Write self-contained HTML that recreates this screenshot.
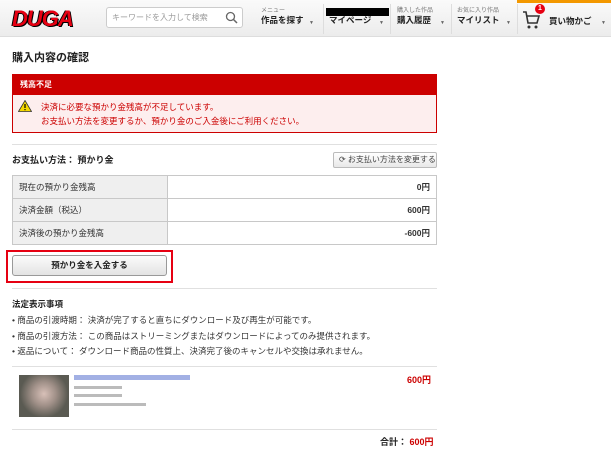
<!DOCTYPE html>
<html><head><meta charset="utf-8"><style>
*{margin:0;padding:0;box-sizing:border-box}
body{width:611px;height:455px;overflow:hidden;background:#fff;font-family:"Liberation Sans","Noto Sans CJK JP",sans-serif;font-size:9px;color:#333;position:relative}
.a{position:absolute}
.hdr{left:0;top:0;width:611px;height:37px;background:linear-gradient(#fafafa,#ececec);border-bottom:1px solid #ddd}
.b{font-weight:bold}
.sep{position:absolute;left:12px;width:425px;height:1px;background:#e0e0e0}
.nav small{display:block;font-size:6px;font-weight:normal;color:#777;line-height:8px}
.nav{position:absolute;top:7px;font-size:8.5px;font-weight:bold;color:#222;line-height:11px;white-space:nowrap}
.vl{position:absolute;top:4px;width:1px;height:30px;background:#ddd}
.ar{position:absolute;top:20px;font-size:5px;color:#666}
td{border:1px solid #c8c8c8;height:23px;padding:0 6px;font-size:8.5px}
table{border-collapse:collapse;position:absolute;left:12px;top:175px;width:425px}
td.l{background:#efefef;width:155px}
td.r{text-align:right;font-weight:bold}
</style></head><body>
<div class="a hdr"></div>
<div class="a" style="left:517px;top:0;width:94px;height:3px;background:#f39800"></div>
<div class="a" style="left:12px;top:6px;font:italic 900 22px 'Liberation Sans',sans-serif;color:#e60012;letter-spacing:-1px;text-shadow:1px 1px 0 #000,-1px 0 0 #000">DUGA</div>
<div class="a" style="left:106px;top:7px;width:137px;height:21px;background:#fff;border:1px solid #ccc;border-radius:3px;font-size:8px;color:#999;padding:4px 5px">キーワードを入力して検索</div>
<svg class="a" style="left:225px;top:11px" width="13" height="13"><circle cx="5.5" cy="5.5" r="4" fill="none" stroke="#666" stroke-width="1.3"/><line x1="8.5" y1="8.5" x2="12" y2="12" stroke="#666" stroke-width="1.5"/></svg>
<div class="nav" style="left:261px"><small>メニュー</small>作品を探す</div><div class="ar" style="left:309px">▼</div>
<div class="vl" style="left:323px"></div>
<div class="a" style="left:326px;top:8px;width:63px;height:8px;background:#000"></div>
<div class="nav" style="left:329px;top:15px">マイページ</div><div class="ar" style="left:379px">▼</div>
<div class="vl" style="left:390px"></div>
<div class="nav" style="left:397px"><small>購入した作品</small>購入履歴</div><div class="ar" style="left:440px">▼</div>
<div class="vl" style="left:451px"></div>
<div class="nav" style="left:457px"><small>お気に入り作品</small>マイリスト</div><div class="ar" style="left:506px">▼</div>
<div class="vl" style="left:517px"></div>
<svg class="a" style="left:522px;top:10px" width="18" height="20"><path d="M1 2h3l2 11h9l2-7H5" fill="none" stroke="#333" stroke-width="1.6"/><circle cx="7" cy="17" r="1.5" fill="#333"/><circle cx="14" cy="17" r="1.5" fill="#333"/></svg>
<div class="a" style="left:535px;top:4px;width:10px;height:10px;border-radius:50%;background:#e60012;color:#fff;font-size:7px;text-align:center;line-height:10px;font-weight:bold">1</div>
<div class="nav" style="left:549px;top:16px">買い物かご</div><div class="ar" style="left:601px">▼</div>

<div class="a b" style="left:12px;top:49px;font-size:11px;color:#222">購入内容の確認</div>
<div class="a" style="left:12px;top:74px;width:425px;height:59px;border:1px solid #cc0000;background:#fdeeee">
<div style="background:#cc0000;color:#fff;font-weight:bold;font-size:8px;height:20px;line-height:20px;padding-left:7px">残高不足</div>
<svg class="a" style="left:5px;top:25px" width="14" height="12"><path d="M7 0.5L13.5 11.5H0.5Z" fill="#f5d800" stroke="#333" stroke-width="0.8"/><rect x="6.4" y="4" width="1.2" height="4" fill="#000"/><rect x="6.4" y="9" width="1.2" height="1.2" fill="#000"/></svg>
<div class="a" style="left:28px;top:25px;color:#cc0000;font-size:8.5px;line-height:14px">決済に必要な預かり金残高が不足しています。<br>お支払い方法を変更するか、預かり金のご入金後にご利用ください。</div>
</div>
<div class="sep" style="top:144px"></div>
<div class="a b" style="left:12px;top:153px;font-size:9px;color:#222">お支払い方法： 預かり金</div>
<div class="a" style="left:333px;top:152px;width:104px;height:16px;border:1px solid #bbb;border-radius:2px;background:linear-gradient(#fff,#e8e8e8);font-size:8px;color:#444;line-height:14px;padding-left:5px">⟳ お支払い方法を変更する</div>
<table>
<tr><td class="l">現在の預かり金残高</td><td class="r">0円</td></tr>
<tr><td class="l">決済金額（税込）</td><td class="r">600円</td></tr>
<tr><td class="l">決済後の預かり金残高</td><td class="r">-600円</td></tr>
</table>
<div class="a" style="left:6px;top:250px;width:167px;height:33px;border:2px solid #e60012"></div>
<div class="a b" style="left:12px;top:255px;width:155px;height:21px;border:1px solid #999;border-radius:3px;background:linear-gradient(#fbfbfb,#e3e3e3);text-align:center;line-height:19px;font-size:8.5px;color:#222">預かり金を入金する</div>
<div class="sep" style="top:288px"></div>
<div class="a b" style="left:12px;top:298px;font-size:8.5px;color:#222">法定表示事項</div>
<div class="a" style="left:12px;top:313px;font-size:8.5px;line-height:15.5px;color:#333">• 商品の引渡時期： 決済が完了すると直ちにダウンロード及び再生が可能です。<br>• 商品の引渡方法： この商品はストリーミングまたはダウンロードによってのみ提供されます。<br>• 返品について： ダウンロード商品の性質上、決済完了後のキャンセルや交換は承れません。</div>
<div class="sep" style="top:366px"></div>
<div class="a" style="left:19px;top:375px;width:50px;height:42px;background:radial-gradient(circle at 50% 45%,#d8c0b8 0,#a09088 35%,#5a5a52 70%)"></div>
<div class="a" style="left:74px;top:375px;width:116px;height:5px;background:#7a8fd8;opacity:.7"></div>
<div class="a" style="left:74px;top:386px;width:48px;height:3px;background:#bbb"></div>
<div class="a" style="left:74px;top:394px;width:48px;height:3px;background:#bbb"></div>
<div class="a" style="left:74px;top:403px;width:72px;height:3px;background:#bbb"></div>
<div class="a b" style="left:407px;top:373px;color:#cc0000;font-size:9px">600円</div>
<div class="sep" style="top:429px"></div>
<div class="a b" style="left:380px;top:435px;font-size:9px;color:#222">合計： <span style="color:#cc0000">600円</span></div>
</body></html>
